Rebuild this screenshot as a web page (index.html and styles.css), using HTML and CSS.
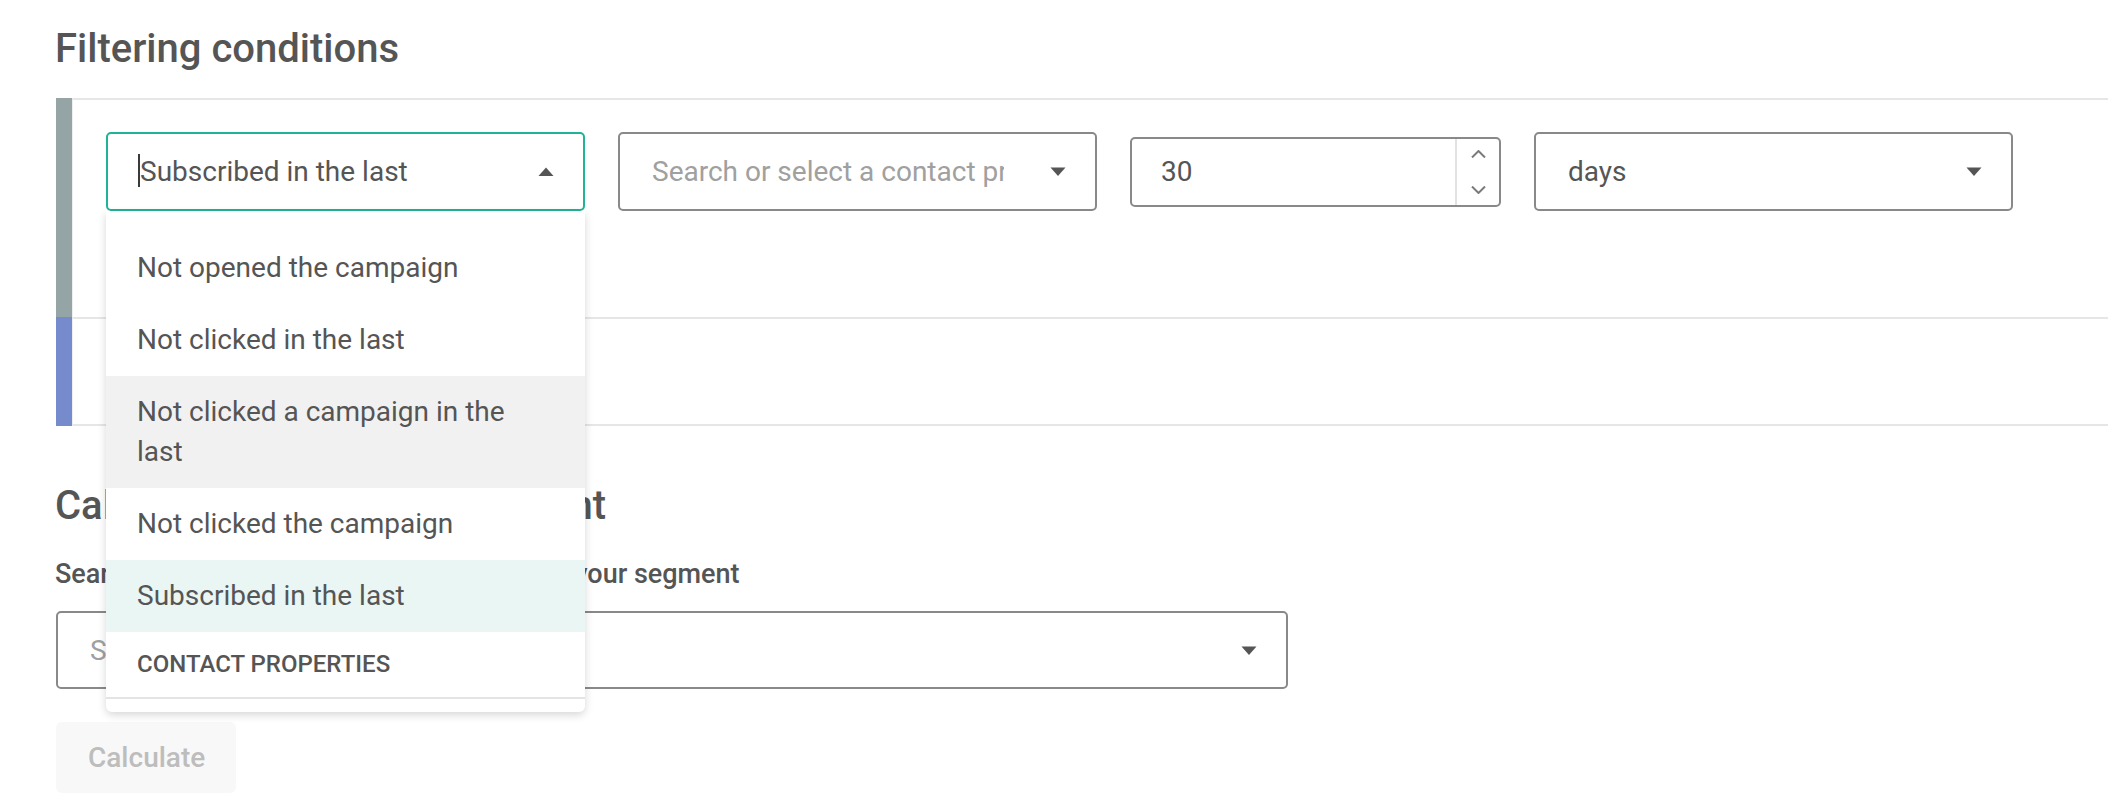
FILE: index.html
```html
<!DOCTYPE html>
<html lang="en">
<head>
<meta charset="utf-8">
<title>Filtering conditions</title>
<link rel="stylesheet" href="styles.css">
</head>
<body>
<main class="page">
  <h1 class="title">Filtering conditions</h1>

  <section class="conditions">
    <div class="cond-row">
      <div class="cond-bar bar-gray"></div>
      <div class="cond-body cond-first">
        <div class="controls">
          <div class="select-wrap">
            <div class="select focused">
              <span class="caret"></span>
              <span class="select-value">Subscribed in the last</span>
              <svg class="arrow" viewBox="0 0 16 9"><polygon points="0.5,9 8,0.5 15.5,9"/></svg>
            </div>
            <ul class="dropdown">
              <li class="opt">Not opened the campaign</li>
              <li class="opt">Not clicked in the last</li>
              <li class="opt hover">Not clicked a campaign in the last</li>
              <li class="opt">Not clicked the campaign</li>
              <li class="opt selected">Subscribed in the last</li>
              <li class="group">Contact properties</li>
              <li class="opt">Email</li>
            </ul>
          </div>

          <div class="select">
            <span class="select-value placeholder">Search or select a contact property</span>
            <svg class="arrow" viewBox="0 0 16 9"><polygon points="0.5,0.5 15.5,0.5 8,9"/></svg>
          </div>

          <div class="number">
            <span class="number-value">30</span>
            <div class="spinner">
              <svg class="chev" viewBox="0 0 15 8"><polyline points="1,7.5 7.5,1 14,7.5"/></svg>
              <svg class="chev" viewBox="0 0 15 8"><polyline points="1,0.5 7.5,7 14,0.5"/></svg>
            </div>
          </div>

          <div class="select">
            <span class="select-value">days</span>
            <svg class="arrow" viewBox="0 0 16 9"><polygon points="0.5,0.5 15.5,0.5 8,9"/></svg>
          </div>
        </div>
      </div>
    </div>
    <div class="cond-row">
      <div class="cond-bar bar-blue"></div>
      <div class="cond-body cond-last"></div>
    </div>
  </section>

  <h2 class="title sub">Calculate size of your segment</h2>
  <label class="field-label">Search or select a property to calculate for your segment</label>
  <div class="select wide">
    <span class="select-value placeholder">Search or select a contact property</span>
    <svg class="arrow" viewBox="0 0 16 9"><polygon points="0.5,0.5 15.5,0.5 8,9"/></svg>
  </div>
  <button class="calc" type="button">Calculate</button>
</main>
</body>
</html>
```

FILE: styles.css
```css
html, body {
  margin: 0;
  padding: 0;
  background: #ffffff;
}

body {
  font-family: Roboto, "Liberation Sans", Arial, sans-serif;
  color: #555555;
  overflow: hidden;
}

.page {
  padding: 25px 0 0 56px;
}

.title {
  margin: 0 0 25px -1px;
  font-size: 40px;
  line-height: 48px;
  font-weight: 500;
  color: #555555;
}

.title.sub {
  margin: 56px 0 0 -1px;
}

/* conditions block */
.conditions {
  display: flex;
  flex-direction: column;
}

.cond-row {
  display: flex;
}

.cond-bar {
  width: 16px;
  flex: none;
}

.bar-gray {
  background: #95a5a5;
}

.bar-blue {
  background: #758bcc;
}

.cond-body {
  flex: 1;
  box-sizing: border-box;
  border-top: 2px solid #e6e6e6;
  border-left: 1px solid #eeeeee;
}

.cond-first {
  height: 219px;
  padding: 32px 0 0 33px;
}

.cond-last {
  height: 109px;
  border-bottom: 2px solid #e6e6e6;
}

.controls {
  display: flex;
  align-items: center;
  gap: 33px;
}

/* select */
.select-wrap {
  position: relative;
  width: 479px;
  flex: none;
}

.select {
  box-sizing: border-box;
  width: 479px;
  height: 79px;
  flex: none;
  display: flex;
  align-items: center;
  padding: 0 29px 0 32px;
  border: 2px solid #898989;
  border-radius: 5px;
  background: #ffffff;
  font-size: 28px;
  color: #555555;
}

.select.focused {
  border-color: #1fb496;
  padding-left: 30px;
}

.select-value {
  flex: 1;
  min-width: 0;
  overflow: hidden;
  white-space: nowrap;
}

.placeholder {
  color: #a0a0a0;
}

.caret {
  flex: none;
  width: 2px;
  height: 33px;
  margin-top: -3px;
  background: #3a3a3a;
}

.arrow {
  width: 16px;
  height: 9px;
  margin-left: 46px;
  flex: none;
  fill: #555555;
}

/* dropdown */
.dropdown {
  position: absolute;
  top: 100%;
  left: 0;
  z-index: 10;
  box-sizing: border-box;
  width: 100%;
  height: 501px;
  margin: 0;
  padding: 21px 0 0;
  list-style: none;
  overflow: hidden;
  background: #ffffff;
  border-radius: 0 0 6px 6px;
  box-shadow: 0 3px 8px rgba(0, 0, 0, 0.16);
}

.opt {
  padding: 16px 34px 16px 31px;
  font-size: 28px;
  line-height: 40px;
  color: #555555;
}

.opt.hover {
  background: #f1f1f1;
}

.opt.selected {
  background: #eaf6f3;
}

.group {
  padding: 16px 31px;
  font-size: 24px;
  line-height: 33px;
  font-weight: 500;
  text-transform: uppercase;
  color: #555555;
  border-bottom: 2px solid #e4e4e4;
}

/* number input */
.number {
  box-sizing: border-box;
  width: 371px;
  height: 70px;
  flex: none;
  display: flex;
  border: 2px solid #898989;
  border-radius: 5px;
  font-size: 28px;
  color: #555555;
}

.number-value {
  flex: 1;
  display: flex;
  align-items: center;
  padding-left: 29px;
}

.spinner {
  width: 42px;
  flex: none;
  display: flex;
  flex-direction: column;
  align-items: center;
  justify-content: space-between;
  padding: 11px 0;
  border-left: 2px solid #e2e2e2;
}

.chev {
  width: 15px;
  height: 8px;
  fill: none;
  stroke: #7a7a7a;
  stroke-width: 2;
}

/* lower section */
.field-label {
  display: block;
  margin: 26px 0 19px -1px;
  font-size: 27px;
  line-height: 36px;
  font-weight: 500;
  color: #555555;
}

.select.wide {
  width: 1232px;
  height: 78px;
}

.calc {
  display: block;
  box-sizing: border-box;
  width: 180px;
  height: 71px;
  margin-top: 33px;
  padding: 0 32px;
  border: none;
  border-radius: 6px;
  background: #f8f8f8;
  font-family: inherit;
  font-size: 28px;
  font-weight: 500;
  color: #bdbdbd;
  text-align: left;
}
```
